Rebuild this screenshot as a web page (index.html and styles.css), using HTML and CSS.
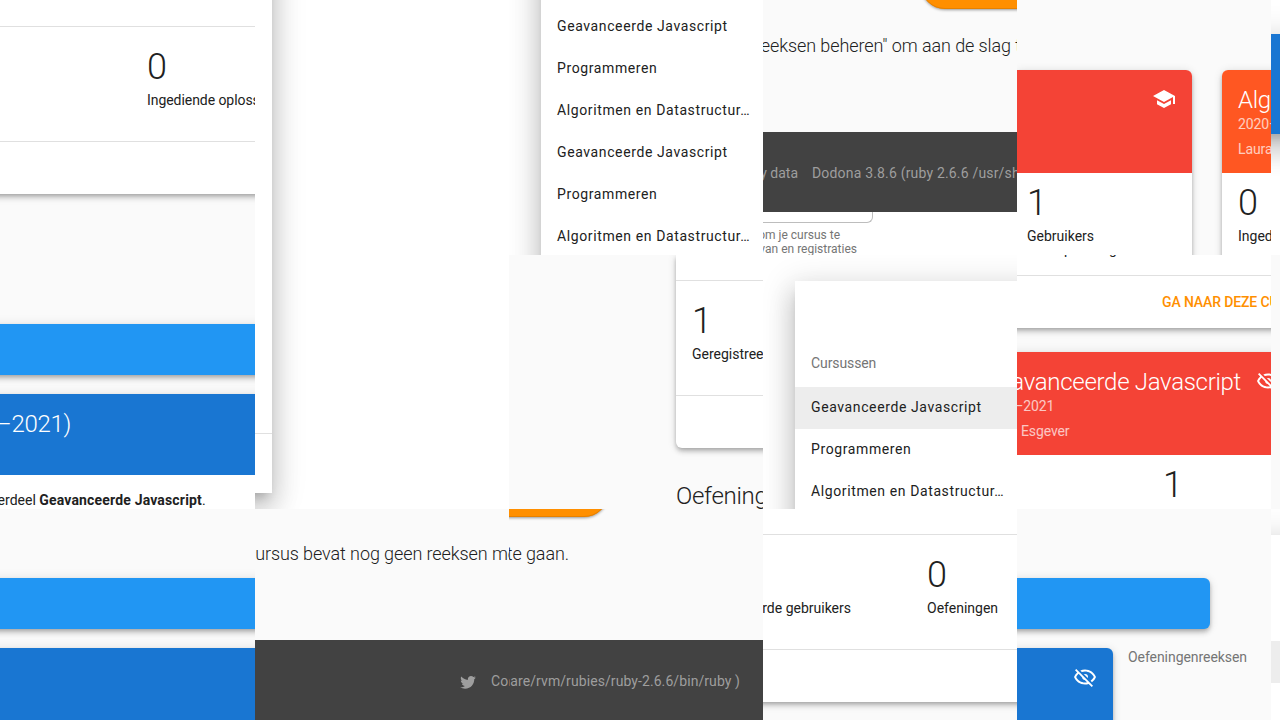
FILE: index.html
```html
<!DOCTYPE html>
<html lang="nl">
<head>
<meta charset="utf-8">
<title>Dodona</title>
<link rel="stylesheet" href="styles.css">
</head>
<body>
<main class="board">
  <section class="tile stats-left">
    <div class="card">
      <div class="stats"><div class="stat"><b class="num">0</b><span class="label">Ingediende oplossingen</span></div></div>
      <div class="actions"></div>
    </div>
  </section>

  <section class="tile dialog-tile">
    <div class="dialog"></div>
  </section>

  <section class="tile drawer-tile drawer-top">
    <ul class="drawer">
      <li>Geavanceerde Javascript</li>
      <li>Programmeren</li>
      <li>Algoritmen en Datastructur…</li>
      <li>Geavanceerde Javascript</li>
      <li>Programmeren</li>
      <li>Algoritmen en Datastructur…</li>
    </ul>
  </section>

  <section class="tile page-end">
    <div class="fab"></div>
    <p class="lead">reeksen beheren" om aan de slag te gaan.</p>
    <footer class="foot"><span class="privacy">Privacy data</span><span class="version">Dodona 3.8.6 (ruby 2.6.6 /usr/share/rvm</span></footer>
    <div class="form">
      <div class="field"></div>
      <p class="help first">om je cursus te</p>
      <p class="help">van en registraties</p>
    </div>
  </section>

  <section class="tile courses">
    <article class="card course one">
      <header class="head red"><svg class="icon" viewBox="0 0 24 24"><path d="M12,3L1,9L12,15L21,10.09V17H23V9M5,13.18V17.18L12,21L19,17.18V13.18L12,17L5,13.18Z"/></svg></header>
      <div class="stat"><b class="num">1</b><span class="label">Gebruikers</span></div>
    </article>
    <article class="card course two">
      <header class="head deep"><h2>Algoritmen</h2><p>2020–2021</p><p class="teacher">Laura Esgever</p></header>
      <div class="stat"><b class="num">0</b><span class="label">Ingediende</span></div>
    </article>
  </section>

  <section class="tile edge-top"><div class="edge-bar"></div></section>

  <section class="tile series">
    <div class="bar"></div>
    <div class="panel"><h2>(2020–2021)</h2></div>
    <p class="note">onderdeel <b>Geavanceerde Javascript</b>.</p>
  </section>

  <section class="tile stats-mid">
    <div class="card">
      <div class="stats"><div class="stat"><b class="num">1</b><span class="label">Geregistreerde gebruikers</span></div></div>
      <div class="actions"></div>
    </div>
    <h2 class="heading">Oefeningenreeksen</h2>
  </section>

  <section class="tile drawer-tile drawer-open">
    <ul class="drawer">
      <li class="caption">Cursussen</li>
      <li class="active">Geavanceerde Javascript</li>
      <li>Programmeren</li>
      <li>Algoritmen en Datastructur…</li>
    </ul>
  </section>

  <section class="tile course-list">
    <div class="card upper">
      <p class="label">Ingediende oplossingen</p>
      <div class="actions"><a class="go">GA NAAR DEZE CURSUS</a></div>
    </div>
    <article class="card lower">
      <header class="head red"><div><h2>Geavanceerde Javascript</h2><p>2020–2021</p><p class="teacher">Laura Esgever</p></div><svg class="icon" viewBox="0 0 24 24"><path d="M2,5.27L3.28,4L20,20.72L18.73,22L15.65,18.92C14.5,19.3 13.28,19.5 12,19.5C7,19.5 2.73,16.39 1,12C1.69,10.24 2.79,8.69 4.19,7.46L2,5.27M12,9A3,3 0 0,1 15,12C15,12.35 14.94,12.69 14.83,13L11,9.17C11.31,9.06 11.65,9 12,9M12,4.5C17,4.5 21.27,7.61 23,12C22.18,14.08 20.79,15.88 19,17.19L17.58,15.76C18.94,14.82 20.06,13.54 20.82,12C19.17,8.64 15.76,6.5 12,6.5C10.91,6.5 9.84,6.68 8.84,7L7.3,5.47C8.74,4.85 10.33,4.5 12,4.5M3.18,12C4.83,15.36 8.24,17.5 12,17.5C12.69,17.5 13.37,17.43 14,17.29L11.72,15C10.29,14.85 9.15,13.71 9,12.28L5.6,8.87C4.61,9.72 3.78,10.78 3.18,12Z"/></svg></header>
      <div class="stat"><b class="num">1</b></div>
    </article>
  </section>

  <section class="tile edge-mid"></section>

  <section class="tile series series-low">
    <div class="bar"></div>
    <div class="panel"></div>
  </section>

  <section class="tile empty-left">
    <p class="lead">cursus bevat nog geen reeksen met</p>
    <footer class="foot"><svg class="bird" viewBox="0 0 24 24"><path d="M22.46,6C21.69,6.35 20.86,6.58 20,6.69C20.88,6.16 21.56,5.32 21.88,4.31C21.05,4.81 20.13,5.16 19.16,5.36C18.37,4.5 17.26,4 16,4C13.65,4 11.73,5.92 11.73,8.29C11.73,8.63 11.77,8.96 11.84,9.27C8.28,9.09 5.11,7.38 3,4.79C2.63,5.42 2.42,6.16 2.42,6.94C2.42,8.43 3.17,9.75 4.33,10.5C3.62,10.5 2.96,10.3 2.38,10V10.03C2.38,12.11 3.86,13.85 5.82,14.24C5.46,14.34 5.08,14.39 4.69,14.39C4.42,14.39 4.15,14.36 3.89,14.31C4.43,16 6,17.26 7.89,17.29C6.43,18.45 4.58,19.13 2.56,19.13C2.22,19.13 1.88,19.11 1.54,19.07C3.44,20.29 5.7,21 8.12,21C16,21 20.33,14.46 20.33,8.79L20.32,8.23C21.16,7.63 21.88,6.87 22.46,6Z"/></svg><span>Contact</span></footer>
  </section>

  <section class="tile empty-right">
    <div class="fab"></div>
    <p class="lead">te gaan.</p>
    <footer class="foot"><span>share/rvm/rubies/ruby-2.6.6/bin/ruby )</span></footer>
  </section>

  <section class="tile stats-right">
    <div class="card">
      <div class="stats">
        <div class="stat users"><span class="label">Geregistreerde gebruikers</span></div>
        <div class="stat"><b class="num">0</b><span class="label">Oefeningen</span></div>
      </div>
      <div class="actions"></div>
    </div>
  </section>

  <section class="tile series series-right">
    <div class="bar"></div>
    <div class="columns">
      <div class="panel"><svg class="icon" viewBox="0 0 24 24"><path d="M2,5.27L3.28,4L20,20.72L18.73,22L15.65,18.92C14.5,19.3 13.28,19.5 12,19.5C7,19.5 2.73,16.39 1,12C1.69,10.24 2.79,8.69 4.19,7.46L2,5.27M12,9A3,3 0 0,1 15,12C15,12.35 14.94,12.69 14.83,13L11,9.17C11.31,9.06 11.65,9 12,9M12,4.5C17,4.5 21.27,7.61 23,12C22.18,14.08 20.79,15.88 19,17.19L17.58,15.76C18.94,14.82 20.06,13.54 20.82,12C19.17,8.64 15.76,6.5 12,6.5C10.91,6.5 9.84,6.68 8.84,7L7.3,5.47C8.74,4.85 10.33,4.5 12,4.5M3.18,12C4.83,15.36 8.24,17.5 12,17.5C12.69,17.5 13.37,17.43 14,17.29L11.72,15C10.29,14.85 9.15,13.71 9,12.28L5.6,8.87C4.61,9.72 3.78,10.78 3.18,12Z"/></svg></div>
      <p class="side">Oefeningenreeksen</p>
    </div>
  </section>

  <section class="tile edge-low"><div class="edge-drawer"><div class="edge-active"></div></div></section>
</main>
</body>
</html>
```

FILE: styles.css
```css
* { box-sizing: border-box; }
body {
  margin: 0;
  background: #fafafa;
  color: #212121;
  font: 14px/20px Roboto, "Liberation Sans", sans-serif;
}
h2, p, ul { margin: 0; padding: 0; font-weight: 400; }
li { list-style: none; }
svg { display: block; flex: none; }

.board {
  display: grid;
  width: 1280px;
  height: 720px;
  grid-template-columns: 255px repeat(4, 254px) 9px;
  grid-template-rows: 255px 254px 211px;
  overflow: hidden;
}
.tile {
  display: flow-root;
  min-width: 0;
  min-height: 0;
  overflow: hidden;
  background: #fafafa;
  white-space: nowrap;
}

/* shared pieces */
.card, .bar, .panel {
  box-shadow: 0 2px 4px -1px rgba(0,0,0,.2), 0 4px 5px 0 rgba(0,0,0,.14), 0 1px 10px 0 rgba(0,0,0,.12);
}
.card { background: #fff; }
.stats {
  display: flex;
  height: 116px;
  padding-top: 20px;
  border-top: 1px solid #e0e0e0;
  border-bottom: 1px solid #e0e0e0;
}
.stat { display: flex; flex-direction: column; }
.num { font-size: 36px; line-height: 40px; font-weight: 300; }
.label { margin-top: 3px; }
.actions { height: 52px; }
.icon { width: 24px; height: 24px; fill: #fff; }
.lead { font-size: 18px; line-height: 24px; font-weight: 300; letter-spacing: -.09px; }
.foot {
  display: flex;
  height: 80px;
  padding-top: 31px;
  background: #424242;
  color: #9e9e9e;
}
.fab {
  height: 48px;
  margin-top: -39px;
  border-radius: 24px;
  background: #ff8f00;
  box-shadow: inset 0 -1px 0 #e68100, 0 1px 3px rgba(0,0,0,.4);
}
.head { height: 103px; padding: 18px 16px 0; color: #fff; }
.head h2, .panel h2 { font-size: 24px; line-height: 24px; font-weight: 300; letter-spacing: -.3px; }
.head p { margin-top: 2px; opacity: .7; letter-spacing: -.1px; }
.head .teacher { margin-top: 5px; }
.red { background: #f44336; }
.deep { background: #ff5722; }

/* statistics cards */
.stats-left .card { margin: 0 -20px; padding-top: 26px; }
.stats-left .stats { padding-left: 167px; }
.stats-left .label { letter-spacing: -.06px; }

.stats-mid .card { margin: 0 -20px 0 167px; padding-top: 25px; border-radius: 0 0 0 6px; }
.stats-mid .stats { padding-left: 16px; }
.heading { margin: 34px 0 0 167px; font-size: 24px; line-height: 28px; font-weight: 300; letter-spacing: -.3px; }

.stats-right .card { margin: 0 -20px; padding-top: 25px; }
.stats-right .stats { padding-left: 20px; }
.users { width: 88px; margin-right: 76px; padding-top: 40px; align-items: flex-end; }

/* dialog edge */
.dialog-tile { grid-column: 2; grid-row: 1 / 3; background: #fff; }
.dialog {
  width: 217px;
  height: 593px;
  margin: -100px 0 0 -200px;
  padding-top: 533px;
  background: #fff;
}
.dialog::after { content: ""; display: block; height: 1px; background: #e0e0e0; }
.dialog, .drawer, .edge-drawer {
  box-shadow: 0 8px 10px -5px rgba(0,0,0,.2), 0 16px 24px 2px rgba(0,0,0,.14), 0 6px 30px 5px rgba(0,0,0,.12);
}

/* course drawer */
.drawer-tile { background: #fff; }
.drawer { margin-left: 32px; height: 330px; background: #fff; letter-spacing: .61px; }
.drawer li { height: 42px; padding: 10px 16px 0; }
.drawer-top .drawer { margin-top: -60px; padding-top: 66px; height: 420px; }
.drawer-open .drawer { margin: 26px -60px 0 32px; padding-top: 62px; }
.drawer .caption { height: 44px; color: #757575; letter-spacing: -.1px; }
.drawer .active { background: #ededed; }

/* end of page with form below */
.page-end .fab { margin-left: 158px; width: 220px; }
.page-end .lead { margin: 25px 0 0 -8px; }
.page-end .foot { margin-top: 74px; gap: 14px; }
.privacy { display: flex; justify-content: flex-end; width: 35px; }
.version { letter-spacing: .18px; }
.form { height: 43px; background: #fff; color: #757575; }
.field { width: 110px; height: 11px; border: 1px solid #bdbdbd; border-width: 0 1px 1px 0; border-radius: 0 0 6px 0; }
.help { display: flex; justify-content: flex-end; width: 94px; font-size: 12px; line-height: 14px; }
.help.first { width: 77px; margin-top: 5px; }

/* course cards */
.courses { display: flex; gap: 30px; padding-top: 70px; }
.course { flex: none; width: 200px; height: 240px; border-radius: 6px; overflow: hidden; }
.one { width: 175px; border-top-left-radius: 0; }
.one .head { display: flex; justify-content: flex-end; padding-top: 17px; }
.one .stat { padding: 10px 0 0 10px; }
.two .stat { padding: 10px 0 0 16px; }

.upper { margin: 0 -20px; }
.upper .label { margin: -16px 0 16px -13px; }
.upper .actions { height: 53px; border-top: 1px solid #e0e0e0; padding: 16px 0 0 165px; }
.go { color: #ff8f00; font-weight: 500; letter-spacing: -.13px; }
.lower { margin: 24px -20px 0; height: 200px; }
.lower .head { display: flex; justify-content: flex-end; gap: 15px; padding: 17px 11px 0 0; }
.lower .head h2 { margin-top: 1px; }
.lower .stat { padding: 10px 0 0 166px; }

/* series bars */
.bar { height: 51px; margin: 69px -20px 0; background: #2196f3; }
.panel { height: 81px; margin: 19px -20px 0; padding-top: 18px; background: #1976d2; color: #fff; }
.panel h2 { display: flex; justify-content: flex-end; width: 91px; }
.note { height: 34px; padding-top: 15px; background: #fff; text-indent: -26px; }
.note b { letter-spacing: .17px; }
.series-right .bar { width: 213px; border-radius: 0 6px 6px 0; }
.columns { display: flex; gap: 15px; }
.series-right .panel { width: 116px; margin-right: 0; padding: 17px 16px 0 76px; border-radius: 0 6px 0 0; }
.side { margin-top: 18px; color: #757575; letter-spacing: -.06px; }

/* empty series message */
.empty-left .lead { margin: 33px 0 0 -9px; }
.empty-left .foot { margin-top: 74px; padding-left: 204px; gap: 14px; letter-spacing: .2px; }
.bird { width: 18px; height: 18px; margin-top: 2px; fill: #9e9e9e; }
.empty-right .fab { width: 220px; margin: -40px 0 0 -121px; }
.empty-right .lead { display: flex; justify-content: flex-end; width: 60px; margin-top: 25px; }
.empty-right .foot { margin-top: 74px; }
.empty-right .foot span { display: flex; justify-content: flex-end; width: 231px; letter-spacing: .08px; }

/* right edge strip */
.edge-top { background: #fff; padding-top: 34px; }
.edge-bar { height: 100px; margin: 0 -60px; background: #1976d2; box-shadow: 0 8px 10px -5px rgba(0,0,0,.2), 0 16px 24px 2px rgba(0,0,0,.14), 0 6px 30px 5px rgba(0,0,0,.12); }
.edge-low { background: #fff; padding-top: 26px; }
.edge-drawer { height: 300px; margin: 0 -60px; padding-top: 106px; background: #fff; }
.edge-active { height: 42px; background: #ededed; }
```
